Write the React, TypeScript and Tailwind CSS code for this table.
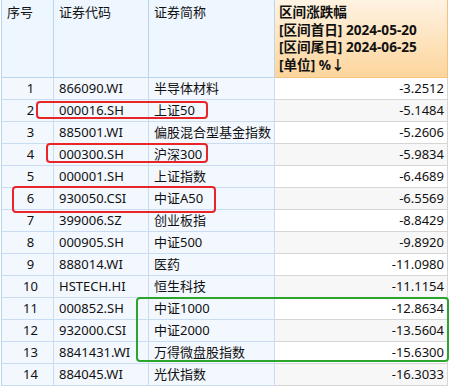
const ROWS: [string, string, string, string][] = [
  ["1", "866090.WI", "半导体材料", "-3.2512"],
  ["2", "000016.SH", "上证50", "-5.1484"],
  ["3", "885001.WI", "偏股混合型基金指数", "-5.2606"],
  ["4", "000300.SH", "沪深300", "-5.9834"],
  ["5", "000001.SH", "上证指数", "-6.4689"],
  ["6", "930050.CSI", "中证A50", "-6.5569"],
  ["7", "399006.SZ", "创业板指", "-8.8429"],
  ["8", "000905.SH", "中证500", "-9.8920"],
  ["9", "888014.WI", "医药", "-11.0980"],
  ["10", "HSTECH.HI", "恒生科技", "-11.1154"],
  ["11", "000852.SH", "中证1000", "-12.8634"],
  ["12", "932000.CSI", "中证2000", "-13.5604"],
  ["13", "8841431.WI", "万得微盘股指数", "-15.6300"],
  ["14", "884045.WI", "光伏指数", "-16.3033"],
];

const grid = "grid grid-cols-[52px_95px_126px_173px]";

export default function App() {
  return (
    <div
      className="relative w-[452px] h-[386px] overflow-hidden bg-white text-[13px] text-[#111]"
      style={{ fontFamily: '"Noto Sans", "Noto Sans CJK SC", sans-serif' }}
    >
      <div className="ml-[1px] border-l border-[#bcd5ef] w-[447px]">
        {/* header */}
        <div className={`${grid} h-[78px]`}>
          <div className="bg-[#eef6ff] border-r border-b border-[#bcd5ef] pl-[5px] pt-[3px]">序号</div>
          <div className="bg-[#eef6ff] border-r border-b border-[#bcd5ef] pl-[5px] pt-[3px]">证券代码</div>
          <div className="bg-[#eef6ff] border-r border-b border-[#bcd5ef] pl-[5px] pt-[3px]">证券简称</div>
          <div className="bg-gradient-to-b from-[#fff3e2] to-[#fcd59c] border-r border-b border-[#f4c27e] pl-[4px] pt-[3px] font-bold text-[13.6px] leading-[17.5px] whitespace-nowrap">
            <div>区间涨跌幅</div>
            <div>[区间首日] 2024-05-20</div>
            <div>[区间尾日] 2024-06-25</div>
            <div>[单位] %↓</div>
          </div>
        </div>

        {/* body */}
        {ROWS.map((r, i) => (
          <div key={r[0]} className={`${grid} h-[22px] leading-[21px]`}>
            <div className="bg-[#f3f8ff] border-r border-b border-[#c9dcf1] text-center pl-[6px]">{r[0]}</div>
            <div className="bg-[#f3f8ff] border-r border-b border-[#c9dcf1] pl-[5px] whitespace-nowrap">{r[1]}</div>
            <div className="bg-[#f3f8ff] border-r border-b border-[#c9dcf1] pl-[5px] whitespace-nowrap overflow-visible">
              <span className="relative z-10">{r[2]}</span>
            </div>
            <div className={`${i % 2 === 1 ? "bg-[#f7f7f7]" : "bg-white"} border-r border-b border-[#d6d6d6] text-right pr-[3px]`}>
              {r[3]}
            </div>
          </div>
        ))}
      </div>

      {/* highlight boxes */}
      <div className="absolute left-[36px] top-[101px] w-[172px] h-[18px] border-2 border-[#e8262a] rounded-[4px]" />
      <div className="absolute left-[46px] top-[143px] w-[162px] h-[20px] border-2 border-[#e8262a] rounded-[4px]" />
      <div className="absolute left-[12px] top-[186px] w-[204px] h-[27px] border-2 border-[#e8262a] rounded-[4px]" />
      <div className="absolute left-[136px] top-[297px] w-[313px] h-[65px] border-[2.5px] border-[#2ca52c] rounded-[4px]" />
    </div>
  );
}
